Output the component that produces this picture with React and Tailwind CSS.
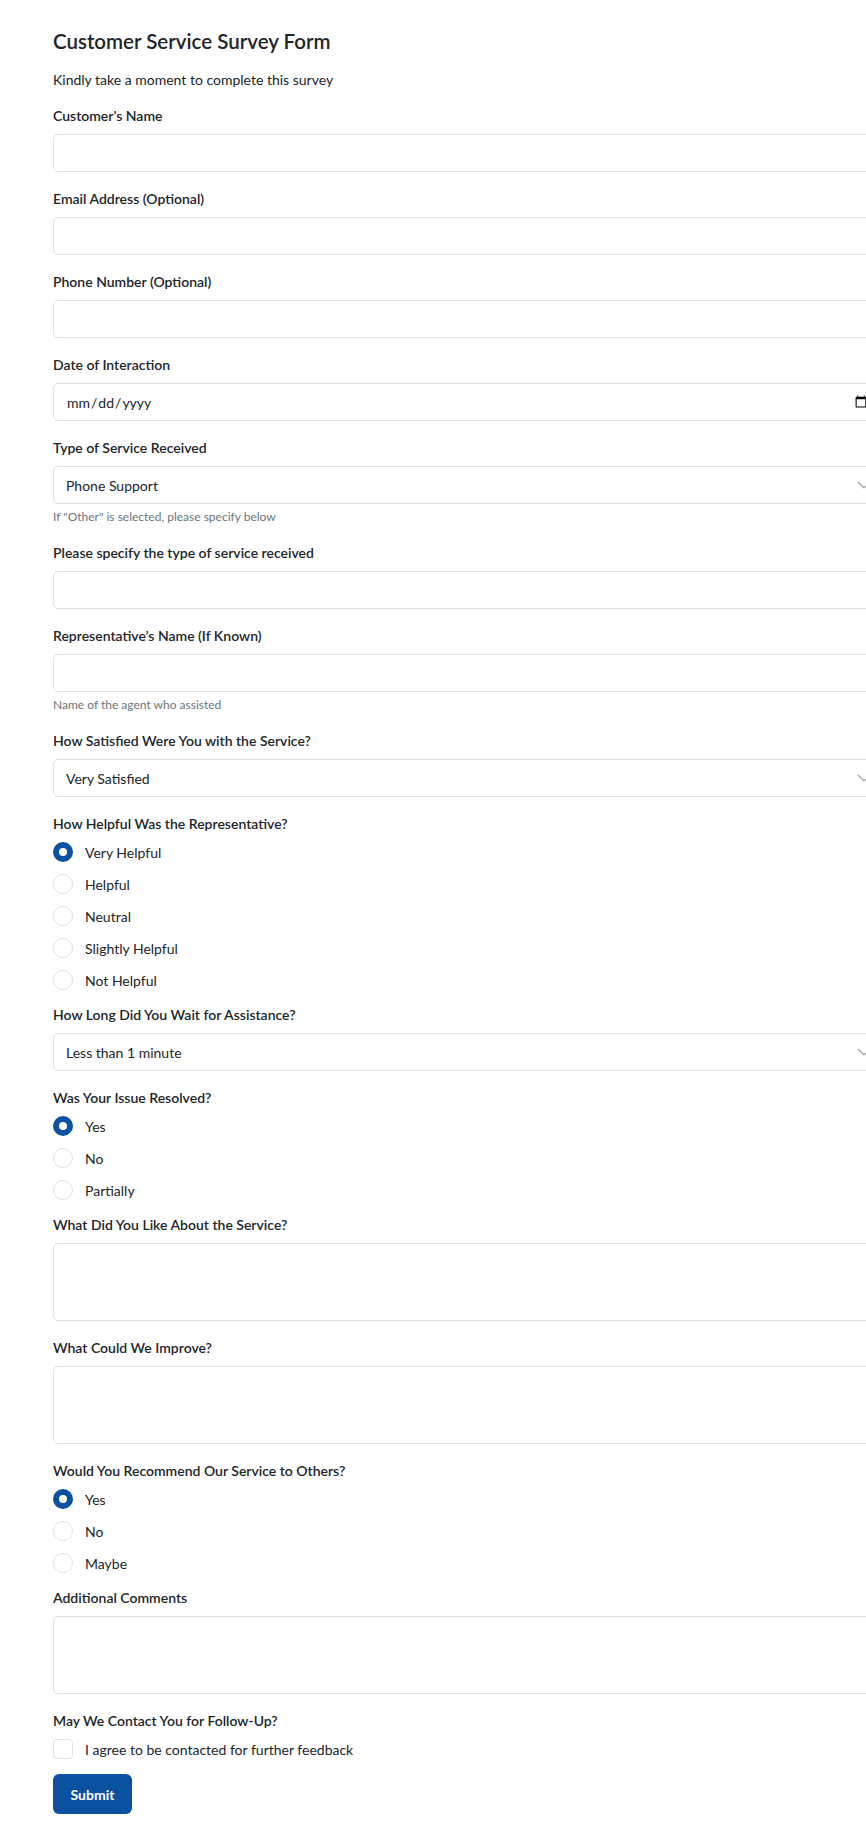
import React, { useState } from "react";

const Label = ({ children }) => (
  <label className="block mb-2 text-[14px] leading-[21px] font-semibold text-[#212529]">{children}</label>
);

const Help = ({ children }) => (
  <p className="mt-1 text-[12px] leading-[18px] text-[#6c757d]">{children}</p>
);

const inputCls =
  "block w-[830px] h-[38px] px-3 border border-[#dee2e6] rounded-[5px] bg-white text-[14px] text-[#212529] outline-none";

const Field = ({ label, help, children }) => (
  <div className="mb-4">
    <Label>{label}</Label>
    {children}
    {help && <Help>{help}</Help>}
  </div>
);

const Chevron = () => (
  <svg className="absolute left-[803px] top-[13px] w-4 h-3" viewBox="0 0 16 12" fill="none">
    <path d="M2 3l6 6 6-6" stroke="#9aa0a6" strokeWidth="1.2" />
  </svg>
);

const Select = ({ value, options }) => (
  <div className="relative w-[830px]">
    <select defaultValue={value} className={inputCls + " appearance-none"}>
      {options.map((o) => (
        <option key={o}>{o}</option>
      ))}
    </select>
    <Chevron />
  </div>
);

const Radio = ({ checked, label, onClick }) => (
  <div className="flex items-center h-5 cursor-pointer" onClick={onClick}>
    {checked ? (
      <span className="w-5 h-5 rounded-full bg-[#0a519f] flex items-center justify-center">
        <span className="w-2 h-2 rounded-full bg-white" />
      </span>
    ) : (
      <span className="w-5 h-5 rounded-full border border-[#dee2e6] bg-white" />
    )}
    <span className="ml-3 text-[14px] text-[#212529]">{label}</span>
  </div>
);

const RadioGroup = ({ label, options }) => {
  const [sel, setSel] = useState(options[0]);
  return (
    <div className="mb-[14px]">
      <Label>{label}</Label>
      <div className="flex flex-col gap-3">
        {options.map((o) => (
          <Radio key={o} label={o} checked={sel === o} onClick={() => setSel(o)} />
        ))}
      </div>
    </div>
  );
};

const TextArea = () => (
  <textarea rows={3} className="block w-[830px] h-[78px] px-3 py-1.5 border border-[#dee2e6] rounded-[5px] text-[14px] outline-none resize-y" />
);

export default function App() {
  const [agree, setAgree] = useState(false);

  return (
    <div className="min-h-screen w-full overflow-hidden bg-white text-[#212529]" style={{ fontFamily: 'Lato, "Open Sans", "Liberation Sans", sans-serif' }}>
      <form className="pl-[53px] pt-[29px] pb-6" onSubmit={(e) => e.preventDefault()}>
        <h1 className="text-[20.5px] leading-[24px] font-semibold mb-4">Customer Service Survey Form</h1>
        <p className="text-[14px] leading-[21px] mb-[15px]">Kindly take a moment to complete this survey</p>

        <Field label="Customer's Name">
          <input type="text" className={inputCls} />
        </Field>
        <Field label="Email Address (Optional)">
          <input type="email" className={inputCls} />
        </Field>
        <Field label="Phone Number (Optional)">
          <input type="tel" className={inputCls} />
        </Field>
        <Field label="Date of Interaction">
          <input type="date" className={inputCls} />
        </Field>
        <Field label="Type of Service Received" help={'If "Other" is selected, please specify below'}>
          <Select value="Phone Support" options={["Phone Support", "Email Support", "Live Chat", "In-Person", "Other"]} />
        </Field>
        <Field label="Please specify the type of service received">
          <input type="text" className={inputCls} />
        </Field>
        <Field label="Representative’s Name (If Known)" help="Name of the agent who assisted">
          <input type="text" className={inputCls} />
        </Field>
        <Field label="How Satisfied Were You with the Service?">
          <Select value="Very Satisfied" options={["Very Satisfied", "Satisfied", "Neutral", "Dissatisfied", "Very Dissatisfied"]} />
        </Field>

        <RadioGroup
          label="How Helpful Was the Representative?"
          options={["Very Helpful", "Helpful", "Neutral", "Slightly Helpful", "Not Helpful"]}
        />

        <Field label="How Long Did You Wait for Assistance?">
          <Select value="Less than 1 minute" options={["Less than 1 minute", "1-5 minutes", "5-10 minutes", "More than 10 minutes"]} />
        </Field>

        <RadioGroup label="Was Your Issue Resolved?" options={["Yes", "No", "Partially"]} />

        <Field label="What Did You Like About the Service?">
          <TextArea />
        </Field>
        <Field label="What Could We Improve?">
          <TextArea />
        </Field>

        <RadioGroup label="Would You Recommend Our Service to Others?" options={["Yes", "No", "Maybe"]} />

        <Field label="Additional Comments">
          <TextArea />
        </Field>

        <div className="mb-[15px]">
          <Label>May We Contact You for Follow-Up?</Label>
          <div className="flex items-center h-5 cursor-pointer" onClick={() => setAgree(!agree)}>
            <span
              className={
                "w-5 h-5 rounded-[4px] border flex items-center justify-center " +
                (agree ? "bg-[#0a519f] border-[#0a519f]" : "bg-white border-[#dee2e6]")
              }
            >
              {agree && (
                <svg viewBox="0 0 16 16" className="w-3.5 h-3.5" fill="none">
                  <path d="M3.5 8.5l3 3 6-7" stroke="white" strokeWidth="2" />
                </svg>
              )}
            </span>
            <span className="ml-3 text-[14px]">I agree to be contacted for further feedback</span>
          </div>
        </div>

        <button type="submit" className="h-10 w-[79px] rounded-[6px] bg-[#0a519f] text-white text-[14px] font-bold">
          Submit
        </button>
      </form>
    </div>
  );
}
